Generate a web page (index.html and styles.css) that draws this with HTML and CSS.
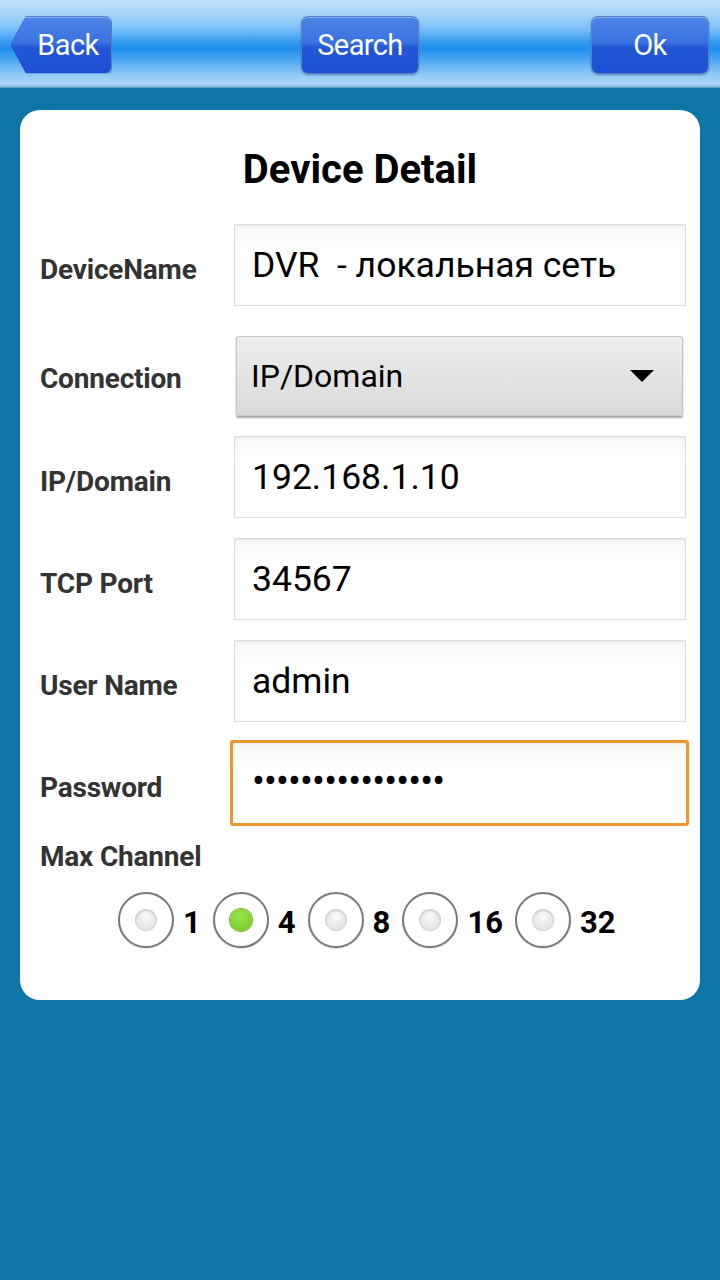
FILE: index.html
```html
<!DOCTYPE html>
<html>
<head>
<meta charset="utf-8">
<link rel="stylesheet" href="styles.css">
</head>
<body>
<header class="topbar">
  <button class="btn btn-back">Back</button>
  <button class="btn btn-mid">Search</button>
  <button class="btn btn-ok">Ok</button>
</header>
<main class="card">
  <h1 class="title">Device Detail</h1>
  <div class="form">
    <label class="lbl">DeviceName</label>
    <div class="field">DVR&nbsp; - локальная сеть</div>

    <label class="lbl lbl-conn">Connection</label>
    <div class="select"><span>IP/Domain</span><span class="caret"></span></div>

    <label class="lbl">IP/Domain</label>
    <div class="field">192.168.1.10</div>

    <label class="lbl">TCP Port</label>
    <div class="field">34567</div>

    <label class="lbl">User Name</label>
    <div class="field">admin</div>

    <label class="lbl">Password</label>
    <div class="field field-focus">••••••••••••••••</div>
  </div>
  <div class="maxch">Max Channel</div>
  <div class="radios">
    <span class="radio"><span class="dot"></span></span><span class="rlbl">1</span>
    <span class="radio"><span class="dot dot-on"></span></span><span class="rlbl">4</span>
    <span class="radio"><span class="dot"></span></span><span class="rlbl">8</span>
    <span class="radio"><span class="dot"></span></span><span class="rlbl">16</span>
    <span class="radio"><span class="dot"></span></span><span class="rlbl">32</span>
  </div>
</main>
</body>
</html>
```
FILE: styles.css
```css
* { box-sizing: border-box; }
html, body { margin: 0; padding: 0; }
body {
  width: 720px;
  height: 1280px;
  background: #0e76a6;
  font-family: Roboto, "Noto Sans", "DejaVu Sans", sans-serif;
  overflow: hidden;
}
.topbar {
  height: 88px;
  display: flex;
  align-items: center;
  padding: 0 0 0 10px;
  background: linear-gradient(to bottom,
    #c2e2fa 0%, #a4d3f8 18%, #76bdf5 34%, #3a9ff1 47%, #1f90ef 56%,
    #4fa9f2 70%, #8ac6f5 84%, #acd7f8 96%, #86b9dc 100%);
  border-bottom: 1px solid #5d9cc9;
}
.btn {
  height: 58px;
  margin-top: 2px;
  border: 1px solid #5a7fc4;
  border-radius: 7px;
  color: #fff;
  font-family: Roboto, "Liberation Sans", sans-serif;
  font-size: 29px;
  letter-spacing: -0.6px;
  background: linear-gradient(to bottom, #4d84e8 0%, #3a73e2 45%, #2357d6 55%, #1c4fd2 100%);
  box-shadow: inset 0 1px 0 rgba(255,255,255,0.35), 0 1px 2px rgba(0,40,120,0.4);
  padding: 0;
}
.btn-back {
  width: 102px;
  padding-left: 14px;
  border-radius: 0 7px 7px 0;
  clip-path: polygon(16px 0, 100% 0, 100% 100%, 16px 100%, 0 50%);
}
.btn-mid { width: 118px; margin-left: 189px; }
.btn-ok { width: 118px; margin-left: 172px; }

.card {
  margin: 22px 20px 0;
  background: #fff;
  border-radius: 20px;
  padding: 36px 14px 52px 20px;
}
.title {
  margin: 0 0 30px -6px;
  text-align: center;
  font-size: 40px;
  line-height: 48px;
  font-weight: 700;
  color: #000;
}
.form {
  display: grid;
  grid-template-columns: 194px 1fr;
  row-gap: 20px;
}
.lbl {
  display: flex;
  align-items: center;
  padding-top: 9px;
  font-size: 28px;
  font-weight: 700;
  color: #333;
  letter-spacing: -0.2px;
}
.lbl-conn { margin-top: 10px; padding-top: 4px; }
.field {
  height: 82px;
  border: 1px solid #dcdcdc;
  background: linear-gradient(to bottom, #f7f7f7, #ffffff 30%);
  box-shadow: inset 0 1px 3px rgba(0,0,0,0.06);
  display: flex;
  align-items: center;
  padding-left: 17px;
  font-size: 35.5px;
  color: #000;
  white-space: nowrap;
}
.field-focus {
  margin: -2px -3px -2px -4px;
  height: 86px;
  border: 3px solid #ee9630;
  border-radius: 3px;
  padding-left: 19px;
  font-size: 38px;
  letter-spacing: -0.8px;
  padding-bottom: 4px;
}
.select {
  margin-top: 10px;
  margin-left: 2px;
  margin-right: 3px;
  height: 80px;
  border: 1px solid #c6c6c6;
  border-radius: 2px;
  background: linear-gradient(to bottom, #eeeeee, #d9d9d9);
  box-shadow: 0 2px 2px rgba(0,0,0,0.35);
  display: flex;
  align-items: center;
  justify-content: space-between;
  padding: 0 28px 0 14px;
  font-size: 32px;
  color: #000;
}
.caret {
  width: 0; height: 0;
  border-left: 12px solid transparent;
  border-right: 12px solid transparent;
  border-top: 12px solid #000;
}
.maxch {
  margin-top: 18px;
  font-size: 28px;
  line-height: 30px;
  font-weight: 700;
  color: #333;
  letter-spacing: -0.2px;
}
.radios {
  margin-top: 20px;
  display: flex;
  align-items: center;
  padding-left: 78px;
}
.radio {
  width: 56px;
  height: 56px;
  border-radius: 50%;
  border: 2.5px solid #7a7a7a;
  background: #fff;
  display: flex;
  align-items: center;
  justify-content: center;
  box-shadow: 0 1px 1px rgba(0,0,0,0.15);
}
.dot {
  width: 20px;
  height: 20px;
  border-radius: 50%;
  background: radial-gradient(circle at 50% 35%, #fafafa, #dcdcdc);
  box-shadow: 0 0 0 1px #cfcfcf, inset 0 1px 1px rgba(0,0,0,0.15);
}
.dot-on {
  width: 22px;
  height: 22px;
  background: radial-gradient(circle at 45% 35%, #9ce44d, #6fc521);
  box-shadow: 0 0 0 1px #6fb42a;
}
.rlbl {
  margin: 0 12px 0 9px;
  font-size: 31px;
  font-weight: 700;
  color: #000;
  padding-top: 4px;
}
```
